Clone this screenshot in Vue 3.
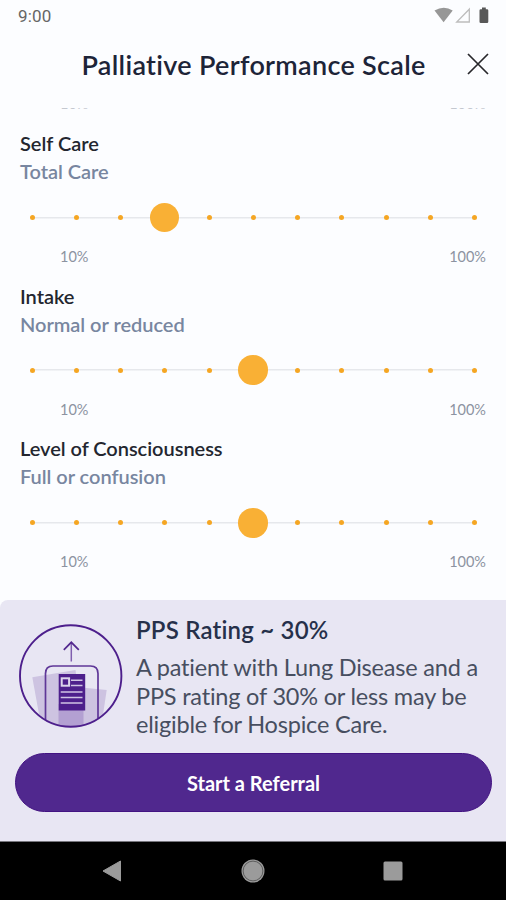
<script setup>
const scales = [
  { name: 'Self Care', value: 'Total Care', step: 3 },
  { name: 'Intake', value: 'Normal or reduced', step: 5 },
  { name: 'Level of Consciousness', value: 'Full or confusion', step: 5 },
]
const steps = Array.from({ length: 11 }, (_, i) => i)
</script>

<template>
  <div class="screen">
    <div class="status">
      <span class="time">9:00</span>
      <svg class="status-icons" width="56" height="18" viewBox="0 0 56 18">
        <path d="M0.5 3.6Q10 -2 18.7 3.6L9.6 15.2Z" fill="#979797" />
        <path d="M35.3 2.2V15H22.7Z" fill="none" stroke="#bdbdbd" stroke-width="1.3" />
        <path d="M48 0.4h3.8v1.8h1.3q1.2 0 1.2 1.2v11.4q0 1.2-1.2 1.2h-6.4q-1.2 0-1.2-1.2v-11.4q0-1.2 1.2-1.2h1.3z" fill="#585858" />
      </svg>
    </div>

    <header class="header">
      <h1 class="title">Palliative Performance Scale</h1>
      <svg class="close" width="22" height="22" viewBox="0 0 22 22">
        <path d="M1 1L21 21M21 1L1 21" stroke="#27272b" stroke-width="1.7" fill="none" />
      </svg>
    </header>

    <main class="scales">
      <div class="range range-clipped"><span>10%</span><span>100%</span></div>
      <section v-for="scale in scales" :key="scale.name" class="scale">
        <h2 class="name">{{ scale.name }}</h2>
        <p class="value">{{ scale.value }}</p>
        <div class="track">
          <span v-for="i in steps" :key="i" class="step">
            <i :class="i === scale.step ? 'thumb' : 'dot'"></i>
          </span>
        </div>
        <div class="range"><span>10%</span><span>100%</span></div>
      </section>
    </main>

    <section class="result">
      <div class="summary">
        <svg class="badge" width="104" height="104" viewBox="0 0 104 104">
          <defs>
            <clipPath id="disc"><circle cx="51.7" cy="52" r="50.5" /></clipPath>
          </defs>
          <g clip-path="url(#disc)">
            <path d="M13.3 53.3L56.5 46L64 104H22.5Z" fill="#cdc3e1" />
            <path d="M60 63.3L87.7 66L82 104H56Z" fill="#cdc3e1" />
            <path d="M39.5 80H64.5V104H39.5Z" fill="#b3a0d2" />
            <path d="M26.5 104V49.5Q26.5 42 34 42H71.5Q79 42 79 49.5V104" fill="none" stroke="#5f3798" stroke-width="1.7" />
          </g>
          <rect x="39.7" y="50" width="26.5" height="36.5" fill="#4d1f8c" />
          <rect x="42.7" y="54.3" width="7.4" height="7.4" fill="none" stroke="#dcd4eb" stroke-width="2" />
          <path d="M52 56.3H63.5M52 61.5H63.5M41.7 68H63.5M41.7 73.5H63.5M41.7 79H63.5" stroke="#cfc3e3" stroke-width="1.5" />
          <path d="M52.3 37.5V18.8" fill="none" stroke="#7f5eae" stroke-width="1.5" />
          <path d="M44.8 25.8L52.3 18.3L59.8 25.8" fill="none" stroke="#53288e" stroke-width="1.7" />
          <circle cx="51.7" cy="52" r="50.7" fill="none" stroke="#4d1f8c" stroke-width="1.9" />
        </svg>
        <div class="copy">
          <h3 class="rating">PPS Rating ~ 30%</h3>
          <p class="advice">A patient with Lung Disease and a PPS rating of 30% or less may be eligible for Hospice Care.</p>
        </div>
      </div>
      <button class="referral" type="button">Start a Referral</button>
    </section>

    <nav class="navbar">
      <svg width="20" height="22" viewBox="0 0 20 22">
        <path d="M1 11L18.5 1V21Z" fill="#9b9b9b" stroke="#9b9b9b" stroke-linejoin="round" />
      </svg>
      <svg width="24" height="24" viewBox="0 0 24 24">
        <circle cx="12" cy="12" r="11.5" fill="#9b9b9b" />
        <circle cx="12" cy="12" r="9.9" fill="none" stroke="#555" stroke-width="0.9" />
      </svg>
      <svg width="20" height="20" viewBox="0 0 20 20">
        <rect x="0.5" y="0.5" width="19" height="19" rx="1.5" fill="#9b9b9b" />
      </svg>
    </nav>
  </div>
</template>

<style>
body {
  margin: 0;
}
</style>

<style scoped>
.screen {
  width: 506px;
  height: 900px;
  display: flex;
  flex-direction: column;
  overflow: hidden;
  background: #fcfdff;
  font-family: Lato, sans-serif;
  font-variant-ligatures: none;
}
h1, h2, h3, p {
  margin: 0;
}
.status {
  height: 32px;
  display: flex;
  justify-content: space-between;
  align-items: center;
  padding: 0 16px 0 18px;
  box-sizing: border-box;
  flex: none;
}
.time {
  font: 400 17px/20px Roboto, sans-serif;
  letter-spacing: 0.2px;
  color: #666;
}
.status-icons {
  display: block;
  margin-top: -1px;
}
.header {
  height: 76px;
  flex: none;
  box-sizing: border-box;
  display: flex;
  justify-content: space-between;
  align-items: flex-start;
  padding: 16px 17px 0 81.5px;
}
.title {
  font-size: 27px;
  line-height: 34px;
  font-weight: 600;
  letter-spacing: 0.3px;
  color: #1d2438;
  white-space: nowrap;
}
.close {
  margin-top: 5px;
}
.scales {
  height: 491.5px;
  flex: none;
  overflow: hidden;
}
.range {
  display: flex;
  justify-content: space-between;
  padding: 0 20px 0 60px;
  font-size: 14.5px;
  line-height: 20px;
  color: #8c93a1;
}
.range-clipped {
  margin-top: -14.5px;
  color: #c4c8d0;
}
.scale {
  height: 152.7px;
  box-sizing: border-box;
  padding-top: 15.6px;
}
.name, .value {
  padding-left: 20px;
  font-size: 20px;
  line-height: 28px;
  font-weight: 600;
  letter-spacing: -0.03px;
  color: #23262f;
}
.value {
  color: #7886a0;
}
.track {
  margin: 16.4px 29px 13.5px 29.5px;
  height: 32px;
  display: flex;
  justify-content: space-between;
  align-items: center;
  background: linear-gradient(#e6e8ec, #e6e8ec) center / calc(100% - 6px) 1.5px no-repeat;
}
.step {
  width: 5px;
  display: flex;
  justify-content: center;
}
.dot {
  width: 5px;
  height: 5px;
  border-radius: 50%;
  background: #f5a623;
}
.thumb {
  flex: none;
  width: 29.5px;
  height: 29.5px;
  margin-left: -1px;
  border-radius: 50%;
  background: #f9b035;
}
.result {
  flex: 1;
  display: flex;
  flex-direction: column;
  background: #e8e6f3;
  border-top-left-radius: 8px;
}
.summary {
  height: 153.5px;
  box-sizing: border-box;
  display: flex;
  padding: 15px 0 0 19px;
  gap: 13px;
}
.badge {
  flex: none;
  margin-top: 9px;
}
.rating {
  font-size: 24px;
  line-height: 30px;
  font-weight: 600;
  letter-spacing: 0.2px;
  color: #26304a;
  white-space: nowrap;
}
.advice {
  width: 356px;
  margin-top: 8.5px;
  font-size: 23.5px;
  line-height: 28.5px;
  letter-spacing: -0.2px;
  color: #474e60;
}
.referral {
  width: 477px;
  height: 59px;
  margin: 0 0 0 15px;
  border: 1px solid #431382;
  border-radius: 30px;
  background: #50288e;
  color: #fff;
  font: 700 20px/24px Lato, sans-serif;
  font-variant-ligatures: none;
}
.navbar {
  height: 59px;
  flex: none;
  box-sizing: border-box;
  border-top: 1px solid #77767d;
  background: #000;
  display: flex;
  justify-content: space-between;
  align-items: center;
  padding: 0 103px 0 102px;
}
</style>
